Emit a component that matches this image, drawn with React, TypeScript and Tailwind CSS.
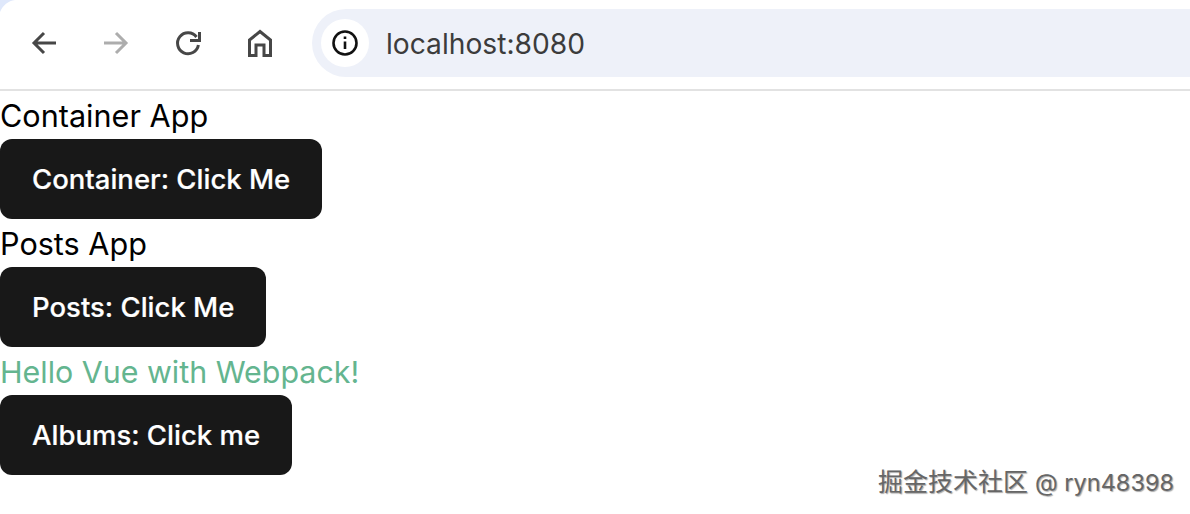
const font = "font-['Inter','Noto_Sans_CJK_SC',sans-serif]";

const DarkButton = ({ label }: { label: string }) => (
  <button className="block h-20 rounded-xl bg-[#181818] px-8 pt-[2px] text-[27.5px] font-medium leading-none text-white [-webkit-text-stroke:0.2px_white]">
    {label}
  </button>
);

const Label = ({ text, green }: { text: string; green?: boolean }) => (
  <div className={`h-12 leading-[50px] ${green ? 'text-[30.4px] text-[#64b58f]' : 'text-[30.6px] text-black'}`}>{text}</div>
);

export default function App() {
  return (
    <div className={`relative h-[514px] w-[1190px] overflow-hidden bg-white ${font}`}>
      {/* Window corner */}
      <svg viewBox="0 0 16 12" className="absolute left-0 top-0 h-3 w-4">
        <path d="M0 0h15C8 1 3 5 0 12z" fill="#dfe8fb" />
      </svg>

      {/* Browser toolbar */}
      <div className="flex h-[91px] items-center border-b-2 border-[#e2e2e2] pb-[3px]">
        <div className="flex w-[312px] items-center gap-[40px] pl-[28px] text-[#474747]">
          <svg viewBox="0 0 32 32" className="h-8 w-8" fill="none" stroke="currentColor" strokeWidth="3">
            <path d="M28 16H7M16 6L6 16l10 10" />
          </svg>
          <svg viewBox="0 0 32 32" className="h-8 w-8 text-[#adadad]" fill="none" stroke="currentColor" strokeWidth="3">
            <path d="M4 16H25M16 6l10 10-10 10" />
          </svg>
          <svg viewBox="0 0 32 32" className="h-8 w-8" fill="none" stroke="currentColor" strokeWidth="3">
            <path d="M26.400 18A10.500 10.500 0 1 1 24.500 10" />
            <path d="M27.500 5v8.500H18" />
          </svg>
          <svg viewBox="0 0 32 32" className="h-8 w-8" fill="none" stroke="currentColor" strokeWidth="3">
            <path d="M5.500 28.500V13L16 4.500 26.500 13v15.500H20V18h-8v10.500z" />
          </svg>
        </div>
        <div className="flex h-[68px] flex-1 items-center rounded-l-[34px] bg-[#eef1f9] pl-[9px]">
          <div className="flex h-12 w-12 items-center justify-center rounded-full bg-white text-[#111]">
            <svg viewBox="0 0 28 28" className="h-[28px] w-[28px]" fill="none" stroke="currentColor" strokeWidth="2.6">
              <circle cx="14" cy="14" r="11.500" />
              <path d="M14 12.500V20M14 7.500v2.600" />
            </svg>
          </div>
          <span className="ml-[17px] pt-[2px] text-[28.2px] text-[#3c3c3c]">localhost:8080</span>
        </div>
      </div>

      {/* Page content */}
      <Label text="Container App" />
      <DarkButton label="Container: Click Me" />
      <Label text="Posts App" />
      <DarkButton label="Posts: Click Me" />
      <Label text="Hello Vue with Webpack!" green />
      <DarkButton label="Albums: Click me" />

      {/* Watermark */}
      <div className="absolute left-[878px] top-[467px] text-[25px] leading-[30px] text-[#666] [text-shadow:1px_1px_1px_#aaa]">
        掘金技术社区 <span className="text-[23.5px]">@ ryn48398</span>
      </div>
    </div>
  );
}
